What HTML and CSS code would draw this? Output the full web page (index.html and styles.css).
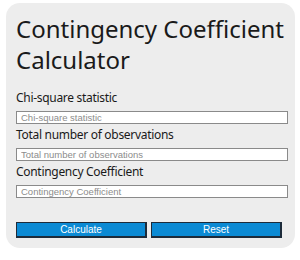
FILE: index.html
```html
<!DOCTYPE html>
<html lang="en">
<head>
  <meta charset="UTF-8" />
  <meta name="viewport" content="width=device-width, initial-scale=1.0"/>
  <title>Contingency Coefficient Calculator</title>
  <link rel="stylesheet" href="styles.css">
</head>
<body>
  <div class="calculadora">
    <h1>Contingency Coefficient Calculator</h1>

    <label for="chi">Chi-square statistic</label>
    <input type="text" id="chi" placeholder="Chi-square statistic">

    <label for="total">Total number of observations</label>
    <input type="text" id="total" placeholder="Total number of observations">

    <label for="resultado">Contingency Coefficient</label>
    <input type="text" id="resultado" placeholder="Contingency Coefficient">

    <div class="botoes">
      <button class="botao" onclick="calcular()">Calculate</button>
      <button class="botao" onclick="limpar()">Reset</button>
    </div>
  </div>

  <script>
    function calcular() {
      const chi = parseFloat(document.getElementById("chi").value);
      const n = parseFloat(document.getElementById("total").value);
      if (isNaN(chi) || isNaN(n)) return;
      const c = Math.sqrt(chi / (chi + n));
      document.getElementById("resultado").value = c.toFixed(4);
    }

    function limpar() {
      document.getElementById("chi").value = "";
      document.getElementById("total").value = "";
      document.getElementById("resultado").value = "";
    }
  </script>
</body>
</html>
```

FILE: styles.css
```css
body {
  margin: 0;
  font-family: 'Noto Sans', sans-serif;
  background: #ffffff;
}

.calculadora {
  width: 272px;
  height: 232px;
  margin: 3px 0 0 6px;
  padding: 10px 7px 3px 10px;
  background-color: #ededed;
  border-radius: 14px;
}

h1 {
  margin: 0 0 14px 0;
  font-size: 24px;
  font-weight: normal;
  line-height: 31px;
  color: #1a1a1a;
}

label {
  display: block;
  margin-top: 2px;
  font-size: 12px;
  letter-spacing: -0.3px;
  line-height: 17px;
  color: #1a1a1a;
}

input {
  display: block;
  box-sizing: border-box;
  width: 272px;
  height: 13px;
  margin: 5px 0 0 0;
  padding: 0 4px;
  border: 1px solid #8a8a8a;
  background: #ffffff;
  font-family: 'Liberation Sans', sans-serif;
  font-size: 9.5px;
}

input::placeholder {
  color: #8c8c8c;
}

.botoes {
  display: flex;
  gap: 4px;
  margin-top: 24px;
}

.botao {
  width: 131px;
  height: 16px;
  padding: 0;
  border: 1px solid #1d2b3a;
  border-width: 1px 2px 2px 1px;
  background-color: #0b8ad4;
  color: #ffffff;
  font-family: 'Liberation Sans', sans-serif;
  font-size: 10px;
  cursor: pointer;
}
```
